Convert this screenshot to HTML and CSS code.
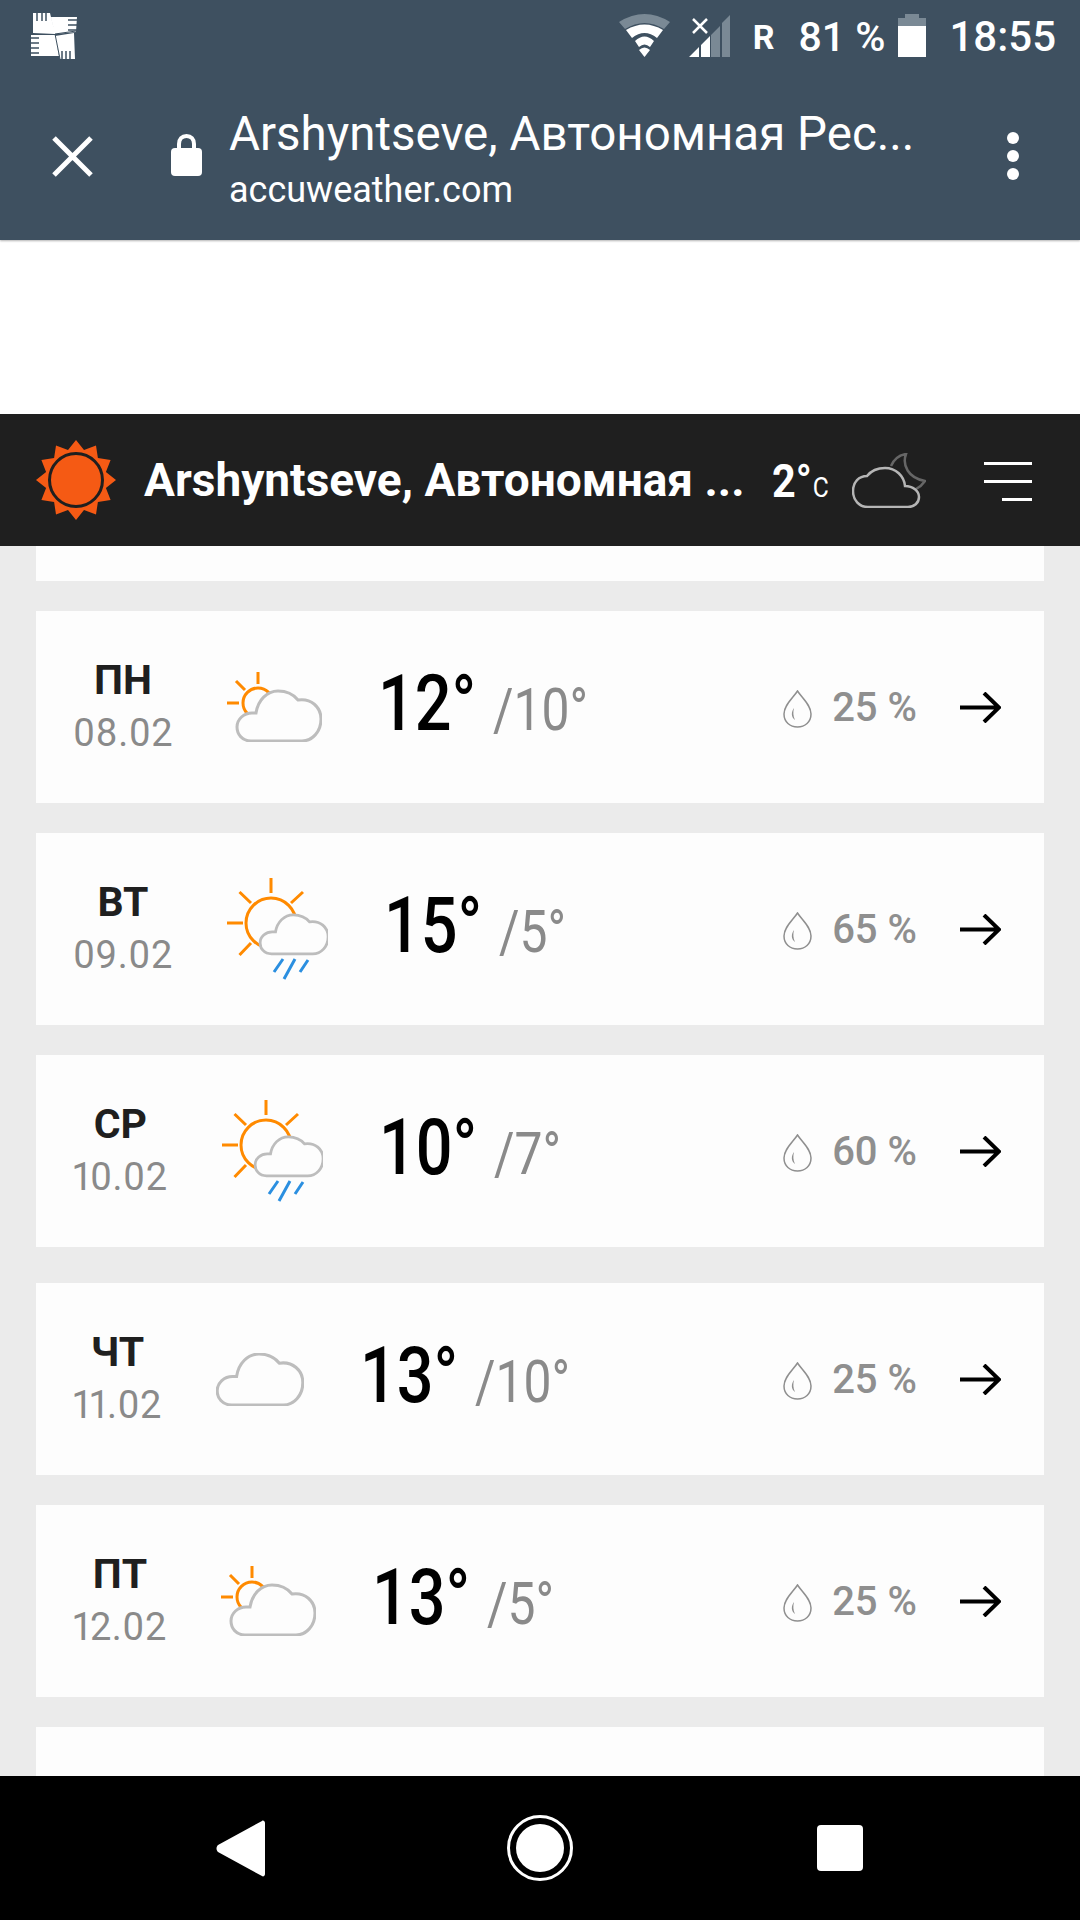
FILE: index.html
```html
<!DOCTYPE html>
<html lang="en">
  <head>
    <meta charset="UTF-8" />
    <meta name="viewport" content="width=device-width, initial-scale=1.0" />
    <title>AccuWeather</title>
    <link rel="stylesheet" href="styles.css">
  </head>
  <body>
    <svg class="sprites" width="0" height="0">
      <defs>
        <path id="cloud-shape" d="M24 69C15 69 10 62 10 55C10 47 17 41 25 41L29 41C31 28 40 19 51 19C60 19 67 23 71 28C84 26 94 35 94 47C94 60 85 69 75 69Z" />
        <symbol id="partly-cloudy" viewBox="0 0 95 70">
          <g class="sun-line">
            <circle cx="31" cy="31" r="15" />
            <path d="M31 0V12M9 9L18 18M0 31H12" />
          </g>
          <use href="#cloud-shape" class="cloud-line" />
        </symbol>
        <symbol id="sun-rain" viewBox="0 0 101 102">
          <g class="sun-line">
            <circle cx="44" cy="45" r="25" />
            <path d="M44 0V15M12.500 14L24 25M76 14L64 25M0 45H16M12.500 77L24 65" />
          </g>
          <use href="#cloud-shape" class="cloud-line cloud-small" transform="translate(25 22) scale(.81 .78)" />
          <path class="rain-line" d="M47 94L56 81M57 101L68 81M73 94L81 82" />
        </symbol>
        <symbol id="cloudy" viewBox="9 18 86 52">
          <use href="#cloud-shape" class="cloud-line" />
        </symbol>
        <symbol id="drop" viewBox="0 0 29 38">
          <path class="drop-line" d="M14.500 1C10 8 1 15 1 24C1 32 7 37 14.500 37C22 37 28 32 28 24C28 15 19 8 14.500 1Z" />
          <path class="drop-fill" d="M11 18C8 22 8 27 12 30C10 26 10 22 11 18Z" />
        </symbol>
        <symbol id="arrow" viewBox="0 0 41 31">
          <path class="arrow-line" d="M0 15.500H39M24 1L39 15.500L24 30" />
        </symbol>
      </defs>
    </svg>

    <div class="page">
      <header class="chrome">
        <div class="status-bar">
          <svg class="avg-icon" width="46" height="46" viewBox="0 0 46 46">
            <path class="avg-patch" d="M2 0L19 0L24 21L2 20ZM20 4L46 4L45 19L24 21ZM0 22L24 22L28 43L0 43ZM24 23L43 20L44 46L29 46Z" />
            <path class="avg-cut" d="M6 0V8M11 0V8M15 0V8M37 7H46M37 12H46M37 17H46M0 25H8M0 30H8M0 35H8M0 40H8M31 38V46M35 38V46M39 38V46" />
            <path class="avg-seam" d="M24 21L29 46M24 21L45 18" />
          </svg>
          <div class="status-right">
            <svg class="status-wifi" width="51" height="43" viewBox="0 0 51 43">
              <path class="dim-fill" d="M0 8Q25.500 -8 51 8L45 15Q25.500 3 6 15Z" />
              <path class="white-fill" d="M7 16Q25.500 5 44 16L38 24Q25.500 14 13 24Z" />
              <path class="white-fill" d="M16 27Q25.500 18 35 27L31 33Q25.500 28 20 33Z" />
              <path class="white-fill" d="M20 36Q25.500 31 31 36L25.500 43Z" />
            </svg>
            <svg class="status-signal" width="41" height="42" viewBox="0 0 41 42">
              <path class="white-fill" d="M0 42L10 32V42ZM12 30L21 21V42H12Z" />
              <path class="dim-fill" d="M22 20L31 11V42H22ZM33 8L41 0V42H33Z" />
              <path class="x-line" d="M4 4L18 18M18 4L4 18" />
            </svg>
            <span class="status-r">R</span>
            <span class="status-pct">81 %</span>
            <svg class="status-battery" width="28" height="43" viewBox="0 0 28 43">
              <path class="dim-fill" d="M7 0H21V4H28V12H0V4H7Z" />
              <rect class="white-fill" y="12" width="28" height="31" />
            </svg>
            <span class="status-time">18:55</span>
          </div>
        </div>
        <div class="toolbar">
          <svg class="close-icon" width="41" height="41" viewBox="0 0 41 41">
            <path d="M2 2L39 39M39 2L2 39" />
          </svg>
          <svg class="lock-icon" width="31" height="42" viewBox="0 0 31 42">
            <path class="lock-bow" d="M8 17V10C8 5 11 2 15.500 2C20 2 23 5 23 10V17" />
            <rect class="white-fill" y="14" width="31" height="28" rx="4" />
          </svg>
          <div class="page-info">
            <div class="page-title">Arshyntseve, Автономная Рес...</div>
            <div class="page-host">accuweather.com</div>
          </div>
          <div class="more-dots"><span></span><span></span><span></span></div>
        </div>
      </header>

      <div class="ad-slot"></div>

      <div class="site-header">
        <svg class="logo" width="82" height="82" viewBox="0 0 82 82">
          <polygon class="logo-sun" points="41,1 49,11.100 61,6.400 62.900,19.100 75.600,21 70.900,33 81,41 70.900,49 75.600,61 62.900,62.900 61,75.600 49,70.900 41,81 33,70.900 21,75.600 19.100,62.900 6.400,61 11.100,49 1,41 11.100,33 6.400,21 19.100,19.100 21,6.400 33,11.100" />
          <circle class="logo-ring" cx="41" cy="41" r="26.500" />
        </svg>
        <div class="site-title">Arshyntseve, Автономная ...</div>
        <div class="site-temp">2°<span class="site-unit">C</span></div>
        <svg class="site-weather" width="74" height="55" viewBox="0 0 74 55">
          <path class="moon-line" d="M39 13C42 6 48 2 54 1C50 12 56 25 73 28C71 31 68 34 64 36" />
          <path class="night-cloud" d="M16 54C7 54 1 47 1 38C1 29 7 23 15 23C19 18 26 15 33 15C44 15 52 23 53 33C61 33 67 38 67 44C67 50 62 54 56 54Z" />
        </svg>
        <div class="burger"><span></span><span></span><span class="short"></span></div>
      </div>

      <main class="forecast">
        <div class="card card-cut"></div>

        <a class="card day-row">
          <div class="day"><div class="day-name">ПН</div><div class="day-date">08.02</div></div>
          <svg class="icon-partly"><use href="#partly-cloudy" /></svg>
          <div class="temps"><span class="high">12°</span><span class="low">/10°</span></div>
          <div class="precip"><svg class="drop"><use href="#drop" /></svg><span class="chance">25 %</span></div>
          <svg class="arrow"><use href="#arrow" /></svg>
        </a>

        <a class="card day-row">
          <div class="day"><div class="day-name">ВТ</div><div class="day-date">09.02</div></div>
          <svg class="icon-rain"><use href="#sun-rain" /></svg>
          <div class="temps"><span class="high">15°</span><span class="low">/5°</span></div>
          <div class="precip"><svg class="drop"><use href="#drop" /></svg><span class="chance">65 %</span></div>
          <svg class="arrow"><use href="#arrow" /></svg>
        </a>

        <a class="card day-row">
          <div class="day"><div class="day-name">СР</div><div class="day-date">10.02</div></div>
          <svg class="icon-rain"><use href="#sun-rain" /></svg>
          <div class="temps"><span class="high">10°</span><span class="low">/7°</span></div>
          <div class="precip"><svg class="drop"><use href="#drop" /></svg><span class="chance">60 %</span></div>
          <svg class="arrow"><use href="#arrow" /></svg>
        </a>

        <a class="card day-row week-start">
          <div class="day"><div class="day-name">ЧТ</div><div class="day-date">11.02</div></div>
          <svg class="icon-cloudy"><use href="#cloudy" /></svg>
          <div class="temps"><span class="high">13°</span><span class="low">/10°</span></div>
          <div class="precip"><svg class="drop"><use href="#drop" /></svg><span class="chance">25 %</span></div>
          <svg class="arrow"><use href="#arrow" /></svg>
        </a>

        <a class="card day-row">
          <div class="day"><div class="day-name">ПТ</div><div class="day-date">12.02</div></div>
          <svg class="icon-partly"><use href="#partly-cloudy" /></svg>
          <div class="temps"><span class="high">13°</span><span class="low">/5°</span></div>
          <div class="precip"><svg class="drop"><use href="#drop" /></svg><span class="chance">25 %</span></div>
          <svg class="arrow"><use href="#arrow" /></svg>
        </a>

        <div class="card day-row"></div>
      </main>

      <nav class="nav-bar">
        <div class="nav-item">
          <svg width="49" height="57" viewBox="0 0 49 57"><path class="white-fill" d="M46 1C47 0 49 1 49 3V54C49 56 47 57 46 56L2 32C0 30 0 27 2 25Z" /></svg>
        </div>
        <div class="nav-item">
          <svg width="66" height="66" viewBox="0 0 66 66"><circle class="home-ring" cx="33" cy="33" r="31.500" /><circle class="white-fill" cx="33" cy="33" r="24" /></svg>
        </div>
        <div class="nav-item">
          <div class="nav-square"></div>
        </div>
      </nav>
    </div>
  </body>
</html>
```

FILE: styles.css
```css
*,
*::before,
*::after {
  margin: 0;
  padding: 0;
  box-sizing: border-box;
}

body {
  font-family: Roboto, sans-serif;
  background: #ebebeb;
}

.sprites {
  position: absolute;
}

.page {
  width: 1080px;
  height: 1920px;
  display: flex;
  flex-direction: column;
  overflow: hidden;
}

/* browser chrome */
.chrome {
  height: 240px;
  background: #3e5060;
  color: #fff;
  box-shadow: 0 1px 2px rgba(0, 0, 0, 0.3);
  position: relative;
}

.white-fill {
  fill: #fff;
}
.dim-fill {
  fill: #7a8995;
}

.status-bar {
  height: 72px;
  padding: 13px 24px 0 31px;
  display: flex;
  justify-content: space-between;
}

.avg-patch {
  fill: #fff;
}
.avg-cut {
  stroke: #3e5060;
  stroke-width: 1.500;
}
.avg-seam {
  stroke: #3e5060;
  stroke-width: 1;
  fill: none;
}

.status-right {
  display: flex;
  align-items: flex-start;
  height: 46px;
}
.status-wifi {
  margin-top: 1px;
}
.status-signal {
  margin: 2px 0 0 19px;
}
.x-line {
  stroke: #fff;
  stroke-width: 2.500;
  fill: none;
}
.status-r {
  margin-left: 23px;
  font-size: 34px;
  font-weight: 700;
  line-height: 48px;
}
.status-pct {
  margin-left: 24px;
  font-size: 41px;
  font-weight: 500;
  line-height: 48px;
}
.status-battery {
  margin: 1px 0 0 13px;
}
.status-time {
  margin-left: 23px;
  font-size: 42px;
  font-weight: 500;
  line-height: 48px;
}

.toolbar {
  height: 168px;
  position: relative;
  display: flex;
  align-items: center;
  padding-left: 52px;
}
.close-icon {
  flex-shrink: 0;
}
.close-icon path {
  stroke: #fff;
  stroke-width: 5;
  fill: none;
}
.lock-icon {
  margin: -2px 0 0 78px;
  flex-shrink: 0;
}
.lock-bow {
  stroke: #fff;
  stroke-width: 4;
  fill: none;
}
.page-info {
  margin: 5px 0 0 27px;
}
.page-title {
  font-size: 47.500px;
  line-height: 58px;
  white-space: nowrap;
}
.page-host {
  font-size: 36px;
  line-height: 44px;
  margin-top: 5px;
}
.more-dots {
  position: absolute;
  right: 61px;
  top: 60px;
  display: flex;
  flex-direction: column;
  gap: 6px;
}
.more-dots span {
  width: 12px;
  height: 12px;
  border-radius: 50%;
  background: #fff;
}

.ad-slot {
  height: 174px;
  background: #fff;
}

/* accuweather header */
.site-header {
  height: 132px;
  background: #1f1f1f;
  color: #fff;
  position: relative;
  display: flex;
  align-items: center;
  padding-left: 35px;
}
.logo-sun {
  fill: #f55a14;
}
.logo-ring {
  fill: #f55a14;
  stroke: #1f1f1f;
  stroke-width: 3;
}
.site-title {
  margin-left: 27px;
  width: 628px;
  font-size: 46px;
  font-weight: 700;
  white-space: nowrap;
}
.site-temp {
  font-size: 47px;
  font-weight: 700;
  transform: scaleX(0.88);
  transform-origin: left center;
}
.site-unit {
  font-size: 28px;
  font-weight: 400;
  margin-left: 1px;
}
.site-weather {
  position: absolute;
  left: 852px;
  top: 39px;
}
.moon-line {
  stroke: #666;
  stroke-width: 2.500;
  fill: none;
}
.night-cloud {
  stroke: #b5b5b5;
  stroke-width: 2.500;
  fill: #1f1f1f;
}
.burger {
  position: absolute;
  right: 48px;
  top: 48px;
  width: 48px;
  display: flex;
  flex-direction: column;
  align-items: flex-end;
  gap: 15px;
}
.burger span {
  width: 48px;
  height: 3px;
  background: #fff;
}
.burger .short {
  width: 30px;
}

/* forecast list */
.forecast {
  flex: 1;
  min-height: 0;
  overflow: hidden;
  padding: 0 36px;
  display: flex;
  flex-direction: column;
  gap: 30px;
}
.card {
  flex-shrink: 0;
  background: #fdfdfd;
}
.card-cut {
  height: 35px;
}
.day-row {
  height: 192px;
  padding: 0 34px 0 37px;
  display: flex;
  align-items: center;
  gap: 54px;
  position: relative;
}
.week-start {
  margin-top: 6px;
}

.day {
  text-align: center;
  flex-shrink: 0;
  margin-top: 6px;
}
.day-name {
  font-size: 41px;
  font-weight: 700;
  line-height: 48px;
  margin-top: -7px;
  color: #1f1f1f;
}
.day-date {
  font-size: 38px;
  line-height: 48px;
  margin-top: 5px;
  letter-spacing: 0.500px;
  font-variant-numeric: proportional-nums;
  color: #8a8a8a;
}

.sun-line {
  stroke: #ff8a00;
  stroke-width: 3;
  fill: none;
}
.cloud-line {
  stroke: #bdbdbd;
  stroke-width: 3;
  fill: #fdfdfd;
}
.cloud-small {
  stroke-width: 3.500;
}
.rain-line {
  stroke: #2b8fe0;
  stroke-width: 3;
  fill: none;
}
.icon-partly {
  width: 95px;
  height: 70px;
  flex-shrink: 0;
}
.icon-rain {
  width: 101px;
  height: 102px;
  flex-shrink: 0;
}
.icon-cloudy {
  width: 88px;
  height: 53px;
  flex-shrink: 0;
}

/* no narrow din-like font here, so the row is squeezed */
.temps {
  display: flex;
  align-items: baseline;
  gap: 20px;
  margin: -8px 0 0 2px;
  white-space: nowrap;
  transform: scaleX(0.83);
  transform-origin: left center;
}
.high {
  font-size: 78px;
  font-weight: 500;
  color: #000;
}
.low {
  font-size: 60px;
  color: #8a8a8a;
}

.precip {
  position: absolute;
  right: 127px;
  top: 76px;
  display: flex;
  align-items: center;
  gap: 20px;
  font-size: 40px;
  font-weight: 500;
  color: #8f8f8f;
}
.chance {
  margin-top: -3px;
}
.drop {
  width: 29px;
  height: 38px;
}
.drop-line {
  stroke: #8f8f8f;
  stroke-width: 1.500;
  fill: none;
}
.drop-fill {
  fill: #8f8f8f;
}
.arrow {
  position: absolute;
  right: 43px;
  top: 81px;
  width: 41px;
  height: 31px;
}
.arrow-line {
  stroke: #000;
  stroke-width: 4;
  fill: none;
}

/* android nav */
.nav-bar {
  height: 144px;
  flex-shrink: 0;
  background: #000;
  display: flex;
  justify-content: center;
  align-items: center;
}
.nav-item {
  width: 300px;
  display: flex;
  justify-content: center;
  align-items: center;
}
.home-ring {
  fill: none;
  stroke: #fff;
  stroke-width: 3;
}
.nav-square {
  width: 46px;
  height: 46px;
  border-radius: 4px;
  background: #fff;
}
```
